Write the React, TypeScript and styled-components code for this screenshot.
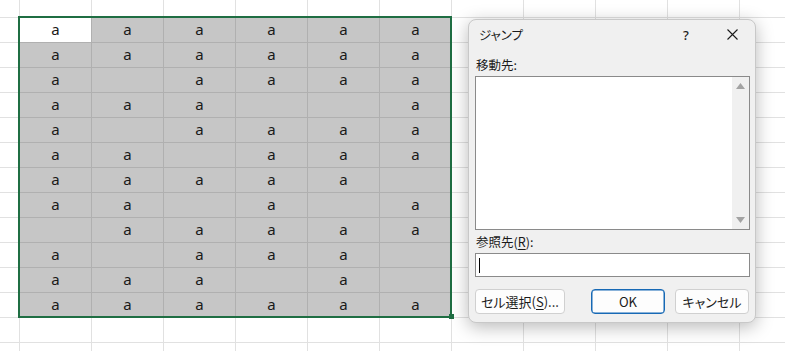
import React from "react";
import styled, { createGlobalStyle } from "styled-components";

const GlobalStyle = createGlobalStyle`
  html, body { margin: 0; padding: 0; background: #fff; overflow: hidden; }
  body { font-family: "Noto Sans CJK JP", "Noto Sans", sans-serif; }
`;

const Sheet = styled.div`
  position: relative;
  width: 785px;
  height: 351px;
  overflow: hidden;
  background: #fff;
`;

const Grid = styled.div`
  display: grid;
  grid-template-columns: 20px repeat(11, 72px);
  grid-template-rows: 18px repeat(14, 25px);
`;

const Cell = styled.div<{ $sel?: boolean; $active?: boolean }>`
  box-sizing: border-box;
  border-right: 1px solid ${(p) => (p.$sel ? "#b0b0b0" : "#e1e1e1")};
  border-bottom: 1px solid ${(p) => (p.$sel ? "#b0b0b0" : "#e1e1e1")};
  background: ${(p) => (p.$sel && !p.$active ? "#c6c6c6" : "#fff")};
  display: flex;
  align-items: center;
  justify-content: center;
  font-family: "Noto Sans", "Liberation Sans", sans-serif;
  font-size: 15px;
  line-height: 1;
  color: #1a1a1a;
  padding-bottom: 2px;
`;

const Selection = styled.div`
  position: absolute;
  left: 18px;
  top: 16px;
  width: 434px;
  height: 302px;
  box-sizing: border-box;
  border: 2px solid #1f6e43;
  pointer-events: none;
`;

const FillHandle = styled.div`
  position: absolute;
  left: 449px;
  top: 314px;
  width: 5px;
  height: 5px;
  background: #1f6e43;
`;

const Dialog = styled.div`
  position: absolute;
  left: 468px;
  top: 19px;
  width: 288px;
  height: 304px;
  box-sizing: border-box;
  background: #f0f0f0;
  border: 1px solid #c8c8c8;
  border-radius: 8px;
  box-shadow: 0 4px 18px rgba(0, 0, 0, 0.28);
  display: flex;
  flex-direction: column;
  font-family: "Noto Sans CJK JP", "Noto Sans", sans-serif;
  font-feature-settings: "palt";
  color: #1a1a1a;
`;

const TitleBar = styled.div`
  height: 27px;
  display: flex;
  align-items: center;
  padding-left: 10px;
`;

const Title = styled.div`
  flex: 1;
  font-size: 12.5px;
  padding-top: 2px;
`;

const TitleButton = styled.div`
  width: 46px;
  height: 27px;
  display: flex;
  align-items: center;
  justify-content: center;
  font-family: "Noto Sans", sans-serif;
  font-size: 13px;
  font-weight: 500;
  padding-top: 2px;
`;

const Body = styled.div`
  display: flex;
  flex-direction: column;
  padding: 0 5px 0 6px;
`;

const Label = styled.div<{ $top: number }>`
  font-size: 12.5px;
  line-height: 16px;
  height: 16px;
  margin-top: ${(p) => p.$top}px;
  padding-left: 1px;
`;

const ListBox = styled.div`
  margin-top: 3px;
  height: 154px;
  box-sizing: border-box;
  border: 1px solid #8a8a8a;
  background: #fff;
  display: flex;
  justify-content: flex-end;
`;

const ScrollBar = styled.div`
  width: 17px;
  background: #f0f0f0;
  display: flex;
  flex-direction: column;
  justify-content: space-between;
  align-items: center;
  padding: 6px 0 6px;
`;

const Input = styled.div`
  margin-top: 3px;
  height: 24px;
  box-sizing: border-box;
  border: 1px solid #8a8a8a;
  background: #fff;
  display: flex;
  align-items: center;
  padding-left: 3px;
`;

const Caret = styled.div`
  width: 1px;
  height: 15px;
  background: #000;
`;

const ButtonRow = styled.div`
  margin-top: 12px;
  display: flex;
  gap: 10px;
  padding-right: 1px;
`;

const Button = styled.div<{ $w: number; $primary?: boolean; $push?: boolean }>`
  width: ${(p) => p.$w}px;
  height: 25px;
  box-sizing: border-box;
  border: 1px solid ${(p) => (p.$primary ? "#1769b5" : "#d0d0d0")};
  border-radius: 4px;
  background: #fdfdfd;
  display: flex;
  align-items: center;
  justify-content: center;
  font-size: 13px;
  margin-left: ${(p) => (p.$push ? "auto" : "0")};
  ${(p) => (p.$primary ? "box-shadow: inset 0 0 0 0.5px #1769b5;" : "")}
`;

const U = styled.span`
  text-decoration: underline;
  text-underline-offset: 2px;
`;

const data: string[] = [
  "aaaaaa",
  "aaaaaa",
  "a_aaaa",
  "aaa__a",
  "a_aaaa",
  "aa_aaa",
  "aaaaa_",
  "aa_a_a",
  "_aaaaa",
  "a_aaa_",
  "aaa_a_",
  "aaaaaa",
];

export default function App() {
  const cells: React.ReactNode[] = [];
  for (let r = 0; r < 15; r++) {
    for (let c = 0; c < 12; c++) {
      const inSel = r >= 1 && r <= 12 && c >= 1 && c <= 6;
      const active = r === 1 && c === 1;
      const text = inSel && data[r - 1][c - 1] === "a" ? "a" : "";
      cells.push(
        <Cell key={`${r}-${c}`} $sel={inSel} $active={active}>
          {text}
        </Cell>
      );
    }
  }
  return (
    <>
      <GlobalStyle />
      <Sheet>
        <Grid>{cells}</Grid>
        <Selection />
        <FillHandle />
        <Dialog>
          <TitleBar>
            <Title>ジャンプ</Title>
            <TitleButton>?</TitleButton>
            <TitleButton>
              <svg width="11" height="11" viewBox="0 0 11 11">
                <path d="M0.5 0.5 L10.5 10.5 M10.5 0.5 L0.5 10.5" stroke="#1a1a1a" strokeWidth="1.1" />
              </svg>
            </TitleButton>
          </TitleBar>
          <Body>
            <Label $top={10}>移動先:</Label>
            <ListBox>
              <ScrollBar>
                <svg width="9" height="6" viewBox="0 0 9 6">
                  <path d="M4.5 0 L9 6 L0 6 Z" fill="#a3a3a3" />
                </svg>
                <svg width="9" height="6" viewBox="0 0 9 6">
                  <path d="M0 0 L9 0 L4.5 6 Z" fill="#a3a3a3" />
                </svg>
              </ScrollBar>
            </ListBox>
            <Label $top={4}>
              参照先(<U>R</U>):
            </Label>
            <Input>
              <Caret />
            </Input>
            <ButtonRow>
              <Button $w={90}>
                セル選択(<U>S</U>)...
              </Button>
              <Button $w={74} $primary $push>
                OK
              </Button>
              <Button $w={74}>キャンセル</Button>
            </ButtonRow>
          </Body>
        </Dialog>
      </Sheet>
    </>
  );
}
